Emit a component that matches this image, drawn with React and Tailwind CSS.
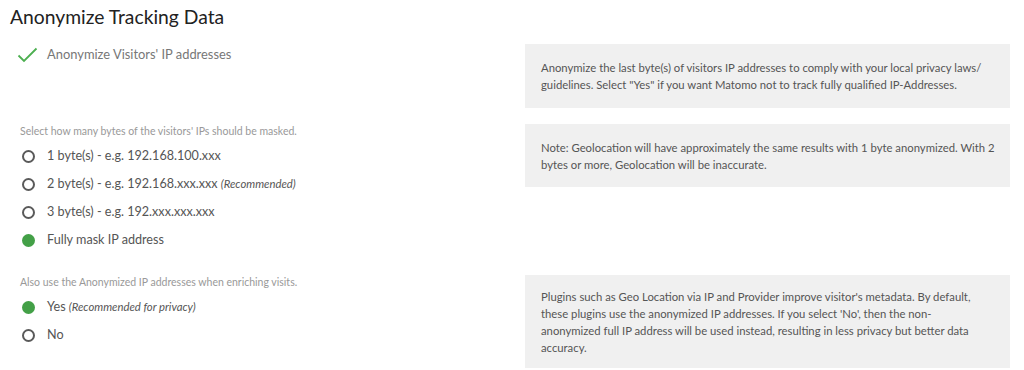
import React from "react";

function Radio({ checked }) {
  return checked ? (
    <span className="inline-block w-[13px] h-[13px] rounded-full bg-[#43a047] shrink-0" />
  ) : (
    <span className="inline-block w-[13px] h-[13px] rounded-full border-2 border-[#5a5a5a] shrink-0" />
  );
}

function RadioItem({ checked, children }) {
  return (
    <div className="flex items-center h-[28px] pl-[12px]">
      <Radio checked={checked} />
      <span className="ml-[12px] text-[12.6px] text-[#555] whitespace-nowrap">{children}</span>
    </div>
  );
}

function Help({ h, lines }) {
  return (
    <div
      className="w-[485px] bg-[#f0f0f0] px-[16px] text-[11.3px] leading-[17px] text-[#555] flex items-center"
      style={{ height: h }}
    >
      <div>
        {lines.map((l, i) => (
          <div key={i} className="whitespace-nowrap">{l}</div>
        ))}
      </div>
    </div>
  );
}

export default function App() {
  return (
    <div className="w-[1024px] h-[370px] bg-white overflow-hidden" style={{ fontFamily: 'Lato, "Open Sans", sans-serif' }}>
      <div className="pl-[10px] pt-[3px]">
        <h2 className="text-[19.3px] leading-[28px] text-[#222] font-normal">Anonymize Tracking Data</h2>

        <div className="flex mt-[13px]">
          <div className="w-[515px]">
            <div className="flex items-center h-[22px] pl-[7px]">
              <svg width="21" height="16" viewBox="0 0 21 16" className="shrink-0">
                <path d="M1.5 8.5 L7 14 L19.5 1.5" fill="none" stroke="#4caf50" strokeWidth="1.8" />
              </svg>
              <span className="ml-[9px] text-[12.9px] text-[#777] whitespace-nowrap">Anonymize Visitors' IP addresses</span>
            </div>
          </div>
          <Help
            h={64}
            lines={[
              "Anonymize the last byte(s) of visitors IP addresses to comply with your local privacy laws/",
              'guidelines. Select "Yes" if you want Matomo not to track fully qualified IP-Addresses.',
            ]}
          />
        </div>

        <div className="flex mt-[16px]">
          <div className="w-[515px]">
            <div className="pl-[10px] text-[10.5px] leading-[14px] text-[#999] whitespace-nowrap">
              Select how many bytes of the visitors' IPs should be masked.
            </div>
            <div className="mt-[4px]">
              <RadioItem>1 byte(s) - e.g. 192.168.100.xxx</RadioItem>
              <RadioItem>
                2 byte(s) - e.g. 192.168.xxx.xxx <em className="text-[11.3px]">(Recommended)</em>
              </RadioItem>
              <RadioItem>3 byte(s) - e.g. 192.xxx.xxx.xxx</RadioItem>
              <RadioItem checked>Fully mask IP address</RadioItem>
            </div>
          </div>
          <div className="self-start">
            <Help
              h={63}
              lines={[
                "Note: Geolocation will have approximately the same results with 1 byte anonymized. With 2",
                "bytes or more, Geolocation will be inaccurate.",
              ]}
            />
          </div>
        </div>

        <div className="flex mt-[21px]">
          <div className="w-[515px]">
            <div className="pl-[10px] text-[10.5px] leading-[14px] text-[#999] whitespace-nowrap">
              Also use the Anonymized IP addresses when enriching visits.
            </div>
            <div className="mt-[4px]">
              <RadioItem checked>
                Yes <em className="text-[11.3px]">(Recommended for privacy)</em>
              </RadioItem>
              <RadioItem>No</RadioItem>
            </div>
          </div>
          <Help
            h={93}
            lines={[
              "Plugins such as Geo Location via IP and Provider improve visitor's metadata. By default,",
              "these plugins use the anonymized IP addresses. If you select 'No', then the non-",
              "anonymized full IP address will be used instead, resulting in less privacy but better data",
              "accuracy.",
            ]}
          />
        </div>
      </div>
    </div>
  );
}
